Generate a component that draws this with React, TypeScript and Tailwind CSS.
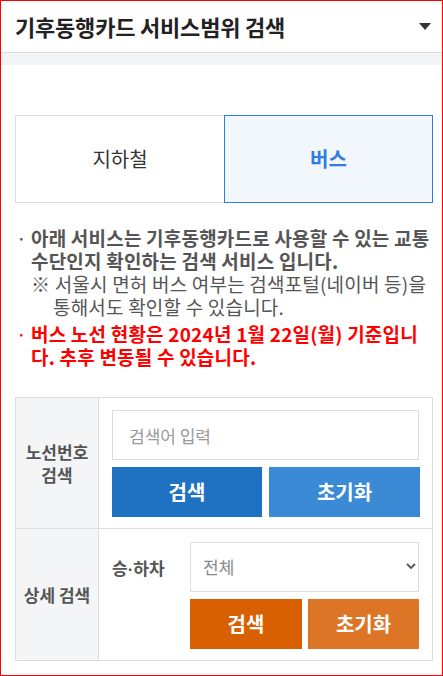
import React, { useState } from 'react';

const font = { fontFamily: '"Noto Sans CJK KR", "Noto Sans", sans-serif' };

export default function App() {
  const [tab, setTab] = useState<'subway' | 'bus'>('bus');
  const [keyword, setKeyword] = useState('');
  const [board, setBoard] = useState('all');

  return (
    <div style={font} className="w-[443px] h-[676px] border border-[#ff0000] bg-white overflow-hidden">
      {/* header */}
      <div className="h-[52px] border-b border-[#dddddd] flex items-center justify-between pl-[14px] pr-[11px]">
        <h1 className="text-[22px] font-bold text-[#222222] tracking-[-0.2px]">기후동행카드 서비스범위 검색</h1>
        <svg width="12" height="7" viewBox="0 0 12 7">
          <path d="M0 0 L12 0 L6 7 Z" fill="#333333" />
        </svg>
      </div>
      <div className="h-[12px] bg-[#f3f4f6]" />

      <div className="pl-[14px] pr-[9px]">
        {/* tabs */}
        <div className="mt-[50px] grid grid-cols-2 h-[88px]">
          <button
            onClick={() => setTab('subway')}
            className={`text-[20px] border ${
              tab === 'subway'
                ? 'border-[#2f7de1] bg-[#f2f7fe] text-[#2f7de1] font-bold'
                : 'border-[#dddddd] border-r-0 bg-white text-[#333333]'
            }`}
          >
            지하철
          </button>
          <button
            onClick={() => setTab('bus')}
            className={`text-[20px] border ${
              tab === 'bus'
                ? 'border-[#2f7de1] bg-[#f2f7fe] text-[#2f7de1] font-bold'
                : 'border-[#dddddd] border-l-0 bg-white text-[#333333]'
            }`}
          >
            버스
          </button>
        </div>

        {/* notes */}
        <div className="mt-[23px] text-[19px] leading-[23px] tracking-[0.2px] whitespace-nowrap">
          <div className="flex text-[#555555]">
            <span className="w-[16px] pl-[1px] shrink-0">·</span>
            <div>
              <p className="font-bold">아래 서비스는 기후동행카드로 사용할 수 있는 교통</p>
              <p className="font-bold">수단인지 확인하는 검색 서비스 입니다.</p>
              <p>※ 서울시 면허 버스 여부는 검색포털(네이버 등)을</p>
              <p className="pl-[22px]">통해서도 확인할 수 있습니다.</p>
            </div>
          </div>
          <div className="flex text-[#ff0000] font-bold mt-[4px]">
            <span className="w-[16px] pl-[1px] shrink-0 font-normal">·</span>
            <div>
              <p>버스 노선 현황은 2024년 1월 22일(월) 기준입니</p>
              <p>다. 추후 변동될 수 있습니다.</p>
            </div>
          </div>
        </div>

        {/* search table */}
        <div className="mt-[29px] border border-[#dddddd] grid grid-cols-[83px_1fr]">
          <div className="bg-[#f4f5f7] border-r border-b border-[#dddddd] flex items-center justify-center text-center text-[17px] leading-[23px] font-bold text-[#555555]">
            노선번호
            <br />
            검색
          </div>
          <div className="border-b border-[#dddddd] pl-[13px] pr-[13px] pt-[12px] pb-[11px] flex flex-col gap-[7px]">
            <input
              value={keyword}
              onChange={(e) => setKeyword(e.target.value)}
              placeholder="검색어 입력"
              className="h-[50px] w-[307px] border border-[#dddddd] px-[16px] text-[17px] text-[#333333] placeholder:text-[#999999] outline-none"
            />
            <div className="flex gap-[7px]">
              <button className="w-[150px] h-[50px] bg-[#1f72c2] text-white text-[20px] font-bold">검색</button>
              <button onClick={() => setKeyword('')} className="w-[151px] h-[50px] bg-[#3a8ad6] text-white text-[20px] font-bold">
                초기화
              </button>
            </div>
          </div>

          <div className="bg-[#f4f5f7] border-r border-[#dddddd] flex items-center justify-center text-[17px] font-bold text-[#555555]">
            상세 검색
          </div>
          <div className="pl-[13px] pr-[13px] pt-[13px] pb-[11px] flex">
            <div className="w-[78px] pt-[15px] text-[17px] leading-[22px] font-bold text-[#555555]">
              승<span style={{ fontFamily: '"Liberation Sans", sans-serif' }}>·</span>하차
            </div>
            <div className="flex flex-col gap-[7px]">
              <div className="relative w-[229px] h-[50px]">
                <select
                  value={board}
                  onChange={(e) => setBoard(e.target.value)}
                  className="appearance-none w-full h-full border border-[#dddddd] bg-white pl-[12px] text-[17px] text-[#888888] outline-none"
                >
                  <option value="all">전체</option>
                  <option value="on">승차</option>
                  <option value="off">하차</option>
                </select>
                <svg className="absolute right-[3px] top-[21px] pointer-events-none" width="10" height="7" viewBox="0 0 10 7">
                  <path d="M1 1 L5 5 L9 1" stroke="#555555" strokeWidth="1.8" fill="none" />
                </svg>
              </div>
              <div className="flex gap-[6px]">
                <button className="w-[112px] h-[50px] bg-[#d86000] text-white text-[20px] font-bold">검색</button>
                <button onClick={() => setBoard('all')} className="w-[111px] h-[50px] bg-[#dc7526] text-white text-[20px] font-bold">
                  초기화
                </button>
              </div>
            </div>
          </div>
        </div>
      </div>
    </div>
  );
}
